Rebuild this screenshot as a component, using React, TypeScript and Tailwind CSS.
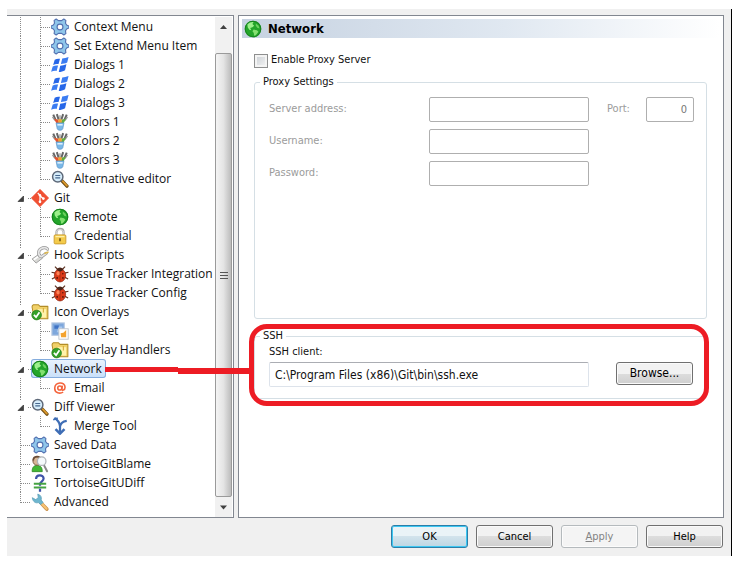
import React from 'react';

type IconName =
  | 'gear' | 'windows' | 'brushes' | 'search' | 'git' | 'globe' | 'lock' | 'hook' | 'bug'
  | 'folder' | 'iconset' | 'at' | 'merge' | 'blame' | 'udiff' | 'wrench';

function Icon({ name }: { name: IconName }) {
  return (
    <svg viewBox="0 0 16 16" className="h-[18px] w-[18px] shrink-0" aria-hidden="true">
      {name === 'gear' && (
        <g stroke="#5270b0" strokeWidth="1" strokeLinejoin="round">
          <path
            d="M4.600 .9 6.600 2.300h2.800L11.400 .9l1.800 1.200-.3 2.600 1 1.500 2 .9v1.800l-2 .9-1 1.500.3 2.600-1.800 1.200-2-1.400H6.600l-2 1.400-1.800-1.200.3-2.600-1-1.500-2-.9V7.100l2-.9 1-1.500-.3-2.600z"
            fill="#8fc6ea"
          />
          <circle cx="8" cy="8" r="2.600" fill="#fff" />
        </g>
      )}
      {name === 'windows' && (
        <g fill="#2767e8">
          <path d="M3.300 3.300c1.700-1 3.200-1 4.700-.8L6.700 7.200c-1.500-.4-3-.2-4.800.8z" />
          <path d="M10 2.200c1.800-.2 3.600-.6 5.600-1.400l-1.200 5c-1.800.9-3.600 1.200-5.600 1.300z" fill="#3b7cf2" />
          <path d="M1.500 9.300c1.700-.9 3.200-1 4.800-.8L5 13.300c-1.500-.3-3-.2-4.900.8z" fill="#3b7cf2" />
          <path d="M8.200 8.600c1.800 0 3.600-.4 5.500-1.200l-1.200 5.200c-1.800.9-3.600 1.600-5.600 1.600z" />
        </g>
      )}
      {name === 'brushes' && (
        <g>
          <path d="M2 1.500 4.500 7M5.200 1 6.800 6M10.800 1 9.200 6M14 1.500 11.500 7" stroke="#666" strokeWidth="1.800" />
          <path d="M1.300 3.500 3.500 6.500M14.700 3.500 12.500 6.500M8 2v4" stroke="#999" strokeWidth="1.200" />
          <path d="M2.700 5 6.500 6 7.500 9.500 4.700 9z" fill="#e5532d" />
          <path d="M13.300 5 9.500 6 8.500 9.500l2.800-.5z" fill="#63ad3f" />
          <path d="M6.500 5.500h3L9.500 9h-3z" fill="#f0a030" />
          <path d="M4.500 8.800h7l-1 5.200c-.8 1.800-4.200 1.800-5 0z" fill="#79b8e8" stroke="#5b94c8" strokeWidth=".6" />
          <path d="M5.700 10.500h4.600" stroke="#e8f5ff" strokeWidth="1.300" />
        </g>
      )}
      {name === 'search' && (
        <g>
          <path d="m9.800 9.700 4.400 4.600" stroke="#6f4d14" strokeWidth="3" strokeLinecap="round" />
          <path d="m10.500 10 3.600 3.900" stroke="#dd9a2c" strokeWidth="1.600" strokeLinecap="round" />
          <circle cx="6" cy="6" r="4.600" fill="#d5ecfa" stroke="#5d6878" strokeWidth="1.300" />
          <path d="M3.800 4.900h4.400M3.800 7h4.400" stroke="#47688f" strokeWidth="1" />
        </g>
      )}
      {name === 'git' && (
        <g>
          <path d="M8 .3 15.700 8 8 15.700.3 8z" fill="#f05033" stroke="#f05033" strokeWidth=".6" strokeLinejoin="round" />
          <path d="m6 3.500 2 2v6M8 6l3 2.600" fill="none" stroke="#fff" strokeWidth="1.100" />
          <circle cx="8" cy="5.500" r="1.100" fill="#fff" />
          <circle cx="8" cy="11.400" r="1.200" fill="#fff" />
          <circle cx="11" cy="8.500" r="1.200" fill="#fff" />
        </g>
      )}
      {name === 'globe' && (
        <g>
          <circle cx="8" cy="8" r="7.400" fill="#23a52a" />
          <circle cx="8" cy="8" r="6.900" fill="none" stroke="#12741a" strokeWidth=".9" opacity=".7" />
          <path d="M3 4c1.500-2 4-2.500 5.500-2.200L7.500 3.500 9 5 7.500 6.500 5.500 7l1 2-1.800-.3L3.300 6.500z" fill="#9df08c" />
          <path d="M8.500 8.500 11.500 9l1.300 1.500-2.300 3-1.500.5-.3-2.500L7.500 10z" fill="#83e070" />
          <path d="M10.500 3 13 5l.8 2.500-2-.7-1.300-1.800z" fill="#6dd260" />
        </g>
      )}
      {name === 'lock' && (
        <g>
          <path d="M4.800 8V4.700c0-4 6.400-4 6.400 0V8" fill="none" stroke="#a8a8a8" strokeWidth="1.900" />
          <path d="M4.800 7V4.700c0-3.300 6.400-3.300 6.400 0V7" fill="none" stroke="#e6e6e6" strokeWidth=".7" />
          <rect x="2.800" y="7" width="10.400" height="8" rx="1" fill="#f4cb4b" stroke="#c99a2a" strokeWidth=".8" />
          <path d="M4 8.500h8" stroke="#fff0a8" strokeWidth="1.200" />
          <path d="M8 10v2.700" stroke="#80621d" strokeWidth="1.600" />
        </g>
      )}
      {name === 'hook' && (
        <g strokeLinecap="round">
          <path d="M7.500 7 1 11.500l3.500 3.700 5.500-4.200z" fill="#d9d9d6" stroke="#999" strokeWidth=".8" strokeLinejoin="round" />
          <path d="m7.500 8.500-4.500 3.300" stroke="#fff" strokeWidth="1.500" />
          <path d="M9.500 9.500C6 9 6 4 9 2.300c2-1.100 4.500-.9 5.800.4M9.500 9.500l4-3" fill="none" stroke="#999" strokeWidth="2.800" />
          <path d="M9.500 9.500C6 9 6 4 9 2.300c2-1.100 4.500-.9 5.800.4M9.500 9.500l4-3" fill="none" stroke="#e6e6e6" strokeWidth="1.500" />
          <path d="m12.500 6.500 2.500-1" stroke="#ddb84f" strokeWidth="1.500" />
        </g>
      )}
      {name === 'bug' && (
        <g>
          <path d="M3.500 1.500 6 4M12.500 1.500 10 4M.5 6.500 4 7.200M15.500 6.500 12 7.200M.8 12.500 4.500 10.500M15.200 12.500 11.500 10.500" stroke="#5a3020" strokeWidth="1" />
          <ellipse cx="8" cy="9.200" rx="5" ry="5.900" fill="#dc3a18" stroke="#8e2410" strokeWidth=".6" />
          <path d="M5 4.500C5.500 1.500 10.500 1.500 11 4.500L8 6z" fill="#4a2418" />
          <ellipse cx="6.400" cy="7.500" rx="1.600" ry="1.900" fill="#ff8155" />
          <path d="M8 6v9" stroke="#8e2410" strokeWidth=".5" />
          <circle cx="5.500" cy="11.500" r=".8" fill="#5e1408" />
          <circle cx="10.600" cy="11.500" r=".8" fill="#5e1408" />
          <circle cx="10.500" cy="7.700" r=".7" fill="#5e1408" />
        </g>
      )}
      {name === 'folder' && (
        <g>
          <path d="M1 4V2.800L2 1.500h4.500L8 3h7v11H3z" fill="#f1d169" stroke="#b28c26" strokeWidth=".9" strokeLinejoin="round" />
          <path d="M6 5.500h7.500v7.500H6z" fill="#fff2ac" />
          <path d="M11 4.500v4" stroke="#d5ac3c" strokeWidth="1" />
          <circle cx="5" cy="10.700" r="4.300" fill="#34a028" stroke="#237c1b" strokeWidth=".6" />
          <path d="m2.600 10.600 1.900 2 3-4.300" fill="none" stroke="#fff" strokeWidth="1.600" />
        </g>
      )}
      {name === 'iconset' && (
        <g>
          <rect x=".8" y=".8" width="11" height="11" fill="#7ea7dc" stroke="#b7c9e2" strokeWidth="1" />
          <path d="M3 3h4v3H3z" fill="#3f72c4" />
          <path d="M7 4h3v5H5z" fill="#a9c9ef" />
          <rect x="7" y="6" width="8.300" height="9.300" fill="#fff" stroke="#bfc4cc" strokeWidth=".8" />
          <path d="M9 13.500 8.500 10l2.500-.5L13.500 7v6.500z" fill="#f4a431" />
        </g>
      )}
      {name === 'at' && (
        <g fill="none" stroke="#f4643c" strokeWidth="1.400">
          <circle cx="7.800" cy="8" r="1.800" />
          <path d="M10.100 5.800 9.600 9c-.1 1.500 2.900 1.300 2.900-1.600C12.500 1.800 3.300 2.300 3.300 8.300c0 4.600 4.800 5 7.500 3.400" />
        </g>
      )}
      {name === 'merge' && (
        <g fill="none" stroke="#3e6db5">
          <path d="M3 .8c2.500 1.500 4.500 4 5 7.200M14 3.500c-3 .5-5.500 2-6 5V14" strokeWidth="2" />
          <path d="M4 10.700 8 14.800l4-4.100" strokeWidth="2.200" />
          <path d="M2 2.500 6 1" strokeWidth="1.500" />
        </g>
      )}
      {name === 'blame' && (
        <g>
          <path d="M1 14.800c0-4 1.500-5.500 4.500-5.500s4.500 1.500 4.500 5.500z" fill="#44b735" stroke="#2d8722" strokeWidth=".7" />
          <circle cx="5.500" cy="5.300" r="3.800" fill="#d8b696" stroke="#77573b" strokeWidth=".8" />
          <path d="M2 4.800C2 .5 8 .3 9 4" stroke="#6a4c35" strokeWidth="1.500" fill="none" />
          <path d="m11.500 9 2.800 5.500" stroke="#888" strokeWidth="1.800" strokeLinecap="round" />
          <circle cx="9.500" cy="5.500" r="3.800" fill="#f5f9fb" stroke="#aeb4b8" strokeWidth="1.100" />
        </g>
      )}
      {name === 'udiff' && (
        <g fill="none">
          <path d="M4.500 4.500C4.500.2 11.200.3 11.200 4c0 2.500-3.200 2.500-3.200 5.500v1" stroke="#3f52a8" strokeWidth="2" />
          <path d="M2.500 8.700h11M2.500 12h11" stroke="#46a343" strokeWidth="1.700" />
          <path d="M8 13v2.800" stroke="#3f52a8" strokeWidth="2" />
        </g>
      )}
      {name === 'wrench' && (
        <g strokeLinecap="round">
          <path d="m9 9 5 5.300" stroke="#c98f4a" strokeWidth="3.200" />
          <path d="m9.200 9 4.600 5" stroke="#f6c272" strokeWidth="2" />
          <path d="M1.200 4.500c.5 3.500 3 4.800 5.300 4l2.300 1.800 1.900-1.900L9 6.200C9.700 3.800 8.700 1.600 6 1l.5 3L4.500 5.700z" fill="#6db6cf" stroke="#5a9fb8" strokeWidth=".7" strokeLinejoin="round" />
        </g>
      )}
    </svg>
  );
}

type Guide = 'line' | 'tee' | 'end' | 'open';

function GuideCell({ kind }: { kind: Guide }) {
  return (
    <svg viewBox="0 0 20 19" className="h-[19px] w-5 shrink-0" aria-hidden="true">
      <g stroke="#8a8a8a" strokeWidth="1" strokeDasharray="1 1">
        {(kind === 'line' || kind === 'tee') && <path d="M9.500 0v19" />}
        {kind === 'end' && <path d="M9.500 0v11" />}
        {(kind === 'tee' || kind === 'end') && <path d="M10 10.500h10" />}
        {kind === 'open' && <path d="M9.500 0v4M17 10.500h3" />}
      </g>
      {kind === 'open' && <path d="M12.500 8v5.500H7z" fill="#404040" stroke="#202020" strokeWidth=".6" />}
    </svg>
  );
}

const tree: { label: string; icon: IconName; guides: Guide[]; selected?: boolean }[] = [
  { label: 'Context Menu', icon: 'gear', guides: ['line', 'tee'] },
  { label: 'Set Extend Menu Item', icon: 'gear', guides: ['line', 'tee'] },
  { label: 'Dialogs 1', icon: 'windows', guides: ['line', 'tee'] },
  { label: 'Dialogs 2', icon: 'windows', guides: ['line', 'tee'] },
  { label: 'Dialogs 3', icon: 'windows', guides: ['line', 'tee'] },
  { label: 'Colors 1', icon: 'brushes', guides: ['line', 'tee'] },
  { label: 'Colors 2', icon: 'brushes', guides: ['line', 'tee'] },
  { label: 'Colors 3', icon: 'brushes', guides: ['line', 'tee'] },
  { label: 'Alternative editor', icon: 'search', guides: ['line', 'end'] },
  { label: 'Git', icon: 'git', guides: ['open'] },
  { label: 'Remote', icon: 'globe', guides: ['line', 'tee'] },
  { label: 'Credential', icon: 'lock', guides: ['line', 'end'] },
  { label: 'Hook Scripts', icon: 'hook', guides: ['open'] },
  { label: 'Issue Tracker Integration', icon: 'bug', guides: ['line', 'tee'] },
  { label: 'Issue Tracker Config', icon: 'bug', guides: ['line', 'end'] },
  { label: 'Icon Overlays', icon: 'folder', guides: ['open'] },
  { label: 'Icon Set', icon: 'iconset', guides: ['line', 'tee'] },
  { label: 'Overlay Handlers', icon: 'folder', guides: ['line', 'end'] },
  { label: 'Network', icon: 'globe', guides: ['open'], selected: true },
  { label: 'Email', icon: 'at', guides: ['line', 'end'] },
  { label: 'Diff Viewer', icon: 'search', guides: ['open'] },
  { label: 'Merge Tool', icon: 'merge', guides: ['line', 'end'] },
  { label: 'Saved Data', icon: 'gear', guides: ['tee'] },
  { label: 'TortoiseGitBlame', icon: 'blame', guides: ['tee'] },
  { label: 'TortoiseGitUDiff', icon: 'udiff', guides: ['tee'] },
  { label: 'Advanced', icon: 'wrench', guides: ['end'] },
];

function SettingsTree() {
  return (
    <nav className="flex w-[227px] shrink-0 border-y border-r border-[#828790] bg-white pt-px pr-px">
      <ul className="min-w-0 flex-1 pb-[6px] pl-1 font-['Open_Sans',sans-serif] text-[12px] leading-[19px] text-[#111]">
        {tree.map((item) => (
          <li key={item.label} className="flex h-[19px] items-center whitespace-nowrap">
            {item.guides.map((kind, i) => (
              <GuideCell key={i} kind={kind} />
            ))}
            <span
              className={
                item.selected
                  ? 'flex h-[19px] items-center gap-[5px] rounded-[3px] bg-linear-to-b from-[#eaf3fd] to-[#c8dff9] pr-1 ring-1 ring-[#84acdd] ring-inset'
                  : 'flex items-center gap-[5px]'
              }
            >
              <Icon name={item.icon} />
              {item.label}
            </span>
          </li>
        ))}
      </ul>
      <div className="flex w-[17px] shrink-0 flex-col bg-[#f1f1f1]" aria-hidden="true">
        <svg viewBox="0 0 17 36" className="h-9 w-[17px]">
          <path d="M5 12 8.500 8l3.500 4z" fill="#404040" />
        </svg>
        <div className="flex flex-1 flex-col items-center justify-center gap-[2px] rounded-[2px] border border-[#9a9a9a] bg-linear-to-r from-[#f4f4f4] via-[#e4e4e4] to-[#bcbcbc]">
          <div className="h-px w-2 bg-[#555]" />
          <div className="h-px w-2 bg-[#555]" />
          <div className="h-px w-2 bg-[#555]" />
        </div>
        <svg viewBox="0 0 17 20" className="h-5 w-[17px]">
          <path d="M5 8.500h7L8.500 12.500z" fill="#404040" />
        </svg>
      </div>
    </nav>
  );
}

const disabledInput = 'h-[25px] w-full min-w-0 rounded-[2px] border border-[#afafaf] bg-white px-[6px] text-[#777] outline-none';
const buttonBase = 'h-[23px] w-[77px] shrink-0 rounded-[3px] border text-center leading-[19px]';
const plainButton = 'border-[#707070] bg-linear-to-b from-[#f2f2f2] from-50% via-[#dddddd] via-50% to-[#cfcfcf] text-black shadow-[inset_0_0_0_1px_#fafafa]';
const defaultButton = 'border-[#2c7ea8] bg-linear-to-b from-[#eaf3f7] from-50% via-[#d2e3ec] via-50% to-[#bcd6e3] text-black shadow-[inset_0_0_0_1px_#3cc7f2]';
const mutedButton = 'border-[#b5babd] bg-[#f4f4f4] text-[#838383] shadow-[inset_0_0_0_1px_#fcfcfc]';

function NetworkPage() {
  return (
    <main className="flex min-w-0 flex-1 flex-col border border-[#828790] bg-white px-[3px] pt-[3px]">
      <header className="flex h-[19px] items-center gap-[6px] bg-linear-to-r from-[#c6d2e1] via-[#e0e8f1] via-55% to-white pl-[2px]">
        <Icon name="globe" />
        <h1 className="text-[13px] leading-[19px] font-bold text-black">Network</h1>
      </header>
      <form className="flex flex-col pr-[13px] pl-3">
        <label className="mt-[15px] flex h-[15px] items-center gap-[3px]">
          <input
            type="checkbox"
            className="h-[14px] w-[14px] appearance-none border border-[#8e8f8f] bg-linear-to-br from-[#c9ced3] to-[#f6f6f6] shadow-[inset_0_0_0_2px_#f4f4f4]"
          />
          Enable Proxy Server
        </label>
        <fieldset className="mt-[7px] h-[244px] min-w-0 rounded-[3px] border border-[#d5dfe5] pr-3 pl-[14px]">
          <legend className="-ml-[9px] px-[3px] leading-[14px]">Proxy Settings</legend>
          <div className="mt-2 grid grid-cols-[160px_1fr_57px_48px] items-center gap-y-[7px] text-[#9b9b9b]">
            <label htmlFor="server">Server address:</label>
            <input id="server" disabled className={disabledInput} />
            <label htmlFor="port" className="pl-[18px]">Port:</label>
            <input id="port" disabled defaultValue="0" className={disabledInput + ' text-right'} />
            <label htmlFor="user" className="col-start-1">Username:</label>
            <input id="user" disabled className={disabledInput} />
            <label htmlFor="password" className="col-start-1">Password:</label>
            <input id="password" type="password" disabled className={disabledInput} />
          </div>
        </fieldset>
        <div className="relative mt-[10px]">
          <fieldset className="h-[70px] min-w-0 rounded-[3px] border border-[#d5dfe5] pr-[13px] pl-[14px]">
            <legend className="-ml-[9px] px-[3px] leading-[14px]">SSH</legend>
            <label htmlFor="ssh" className="mt-px block leading-[15px]">SSH client:</label>
            <div className="mt-[3px] flex text-[12px]">
              <input
                id="ssh"
                defaultValue="C:\Program Files (x86)\Git\bin\ssh.exe"
                className="h-[25px] min-w-0 flex-1 rounded-[2px] border border-[#dde3eb] border-t-[#abadb3] bg-white px-[5px] outline-none"
              />
              <button type="button" className={buttonBase + ' ml-[27px] ' + plainButton}>Browse...</button>
            </div>
          </fieldset>
          <div className="pointer-events-none absolute -top-[5px] -right-[2px] -bottom-[7px] -left-[5px] rounded-[18px] border-[5px] border-[#ed1c24]" aria-hidden="true">
            <svg viewBox="0 0 149 8" className="absolute right-full bottom-[26px] h-2 w-[149px]">
              <path d="M0 0h73v1h76v6H73V5H0z" fill="#ed1c24" />
            </svg>
          </div>
        </div>
      </form>
    </main>
  );
}

export default function App() {
  return (
    <div className="bg-white pt-[9px] pr-[14px] pb-[13px] pl-[7px] font-['DejaVu_Sans_Condensed','DejaVu_Sans',sans-serif] text-[11px] text-[#111]">
      <div className="border-r border-black bg-[#f0f0f0] pt-[6px] pr-[7px] pb-2">
        <div className="flex gap-[4px]">
          <SettingsTree />
          <NetworkPage />
        </div>
        <footer className="mt-[7px] flex justify-end gap-2 pr-px">
          <button type="button" className={buttonBase + ' ' + defaultButton}>OK</button>
          <button type="button" className={buttonBase + ' ' + plainButton}>Cancel</button>
          <button type="button" disabled className={buttonBase + ' ' + mutedButton}>
            <span className="underline">A</span>pply
          </button>
          <button type="button" className={buttonBase + ' ' + plainButton}>Help</button>
        </footer>
      </div>
    </div>
  );
}
